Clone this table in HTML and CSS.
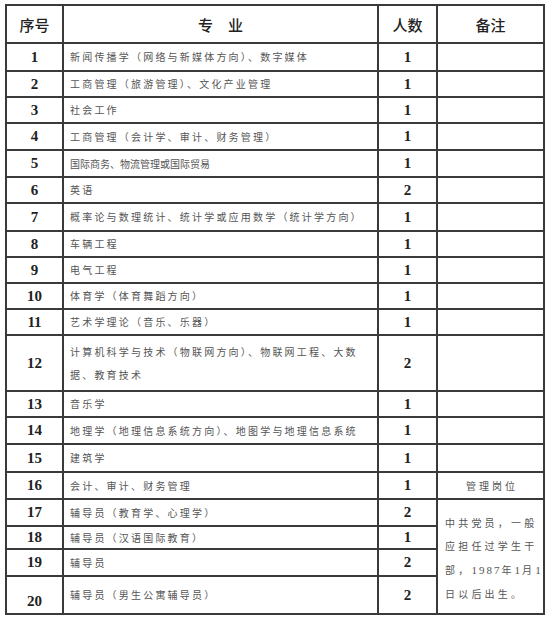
FILE: index.html
```html
<!DOCTYPE html>
<html lang="zh-CN">
<head>
<meta charset="utf-8">
<title>招聘专业表</title>
<link rel="stylesheet" href="styles.css">
</head>
<body>
<table class="grid">
  <colgroup>
    <col class="c-no"><col class="c-major"><col class="c-num"><col class="c-note">
  </colgroup>
  <thead>
    <tr class="h38">
      <th>序号</th>
      <th>专　业</th>
      <th>人数</th>
      <th>备注</th>
    </tr>
  </thead>
  <tbody>
    <tr class="h28"><td class="no">1</td><td class="major">新闻传播学（网络与新媒体方向）、数字媒体</td><td class="num">1</td><td></td></tr>
    <tr class="h26"><td class="no">2</td><td class="major">工商管理（旅游管理）、文化产业管理</td><td class="num">1</td><td></td></tr>
    <tr class="h26"><td class="no">3</td><td class="major">社会工作</td><td class="num">1</td><td></td></tr>
    <tr class="h27"><td class="no">4</td><td class="major">工商管理（会计学、审计、财务管理）</td><td class="num">1</td><td></td></tr>
    <tr class="h27"><td class="no">5</td><td class="major tight">国际商务、物流管理或国际贸易</td><td class="num">1</td><td></td></tr>
    <tr class="h26"><td class="no">6</td><td class="major">英语</td><td class="num">2</td><td></td></tr>
    <tr class="h28"><td class="no">7</td><td class="major">概率论与数理统计、统计学或应用数学（统计学方向）</td><td class="num">1</td><td></td></tr>
    <tr class="h26"><td class="no">8</td><td class="major">车辆工程</td><td class="num">1</td><td></td></tr>
    <tr class="h26"><td class="no">9</td><td class="major">电气工程</td><td class="num">1</td><td></td></tr>
    <tr class="h26"><td class="no">10</td><td class="major">体育学（体育舞蹈方向）</td><td class="num">1</td><td></td></tr>
    <tr class="h26"><td class="no">11</td><td class="major">艺术学理论（音乐、乐器）</td><td class="num">1</td><td></td></tr>
    <tr class="h56"><td class="no">12</td><td class="major two">计算机科学与技术（物联网方向）、物联网工程、大数据、教育技术</td><td class="num">2</td><td></td></tr>
    <tr class="h26"><td class="no">13</td><td class="major">音乐学</td><td class="num">1</td><td></td></tr>
    <tr class="h27"><td class="no">14</td><td class="major">地理学（地理信息系统方向）、地图学与地理信息系统</td><td class="num">1</td><td></td></tr>
    <tr class="h28"><td class="no">15</td><td class="major">建筑学</td><td class="num">1</td><td></td></tr>
    <tr class="h27"><td class="no">16</td><td class="major">会计、审计、财务管理</td><td class="num">1</td><td class="note">管理岗位</td></tr>
    <tr class="h27"><td class="no">17</td><td class="major">辅导员（教育学、心理学）</td><td class="num">2</td>
      <td class="note-long" rowspan="4"><span class="ln">中共党员，一般</span><span class="ln">应担任过学生干</span><span class="ln">部，<span class="dg">1987</span>年<span class="dg">1</span>月<span class="dg">1</span></span><span class="ln">日以后出生。</span></td></tr>
    <tr class="h23"><td class="no">18</td><td class="major">辅导员（汉语国际教育）</td><td class="num">1</td></tr>
    <tr class="h27"><td class="no">19</td><td class="major">辅导员</td><td class="num">2</td></tr>
    <tr class="h38"><td class="no low"><span class="low-num">20</span></td><td class="major">辅导员（男生公寓辅导员）</td><td class="num">2</td></tr>
  </tbody>
</table>
</body>
</html>
```
FILE: styles.css
```css
html, body {
  margin: 0;
  padding: 0;
  background: #ffffff;
}

body {
  padding: 4px 0 0 5px;
  font-family: "Noto Sans CJK SC", "Liberation Serif", serif;
}

.grid {
  border-collapse: collapse;
  table-layout: fixed;
  width: 540px;
}

.c-no { width: 57px; }
.c-major { width: 315px; }
.c-num { width: 59px; }
.c-note { width: 107px; }

.grid th,
.grid td {
  border: 2px solid #3a3a3a;
  padding: 0;
  vertical-align: middle;
}

.grid th {
  font-family: "Noto Sans CJK SC", serif;
  font-weight: 500;
  font-size: 15px;
  color: #222;
  text-align: center;
  line-height: 1;
}

/* cell heights exclude the 2px of collapsed border */
.h23 td { height: 21px; }
.h26 td { height: 24px; }
.h27 td { height: 25px; }
.h28 td { height: 26px; }
.h38 td, .h38 th { height: 36px; }
.h56 td { height: 54px; }

.no,
.num {
  font-family: "Liberation Serif", "Times New Roman", serif;
  font-weight: 700;
  font-size: 15px;
  color: #222;
  text-align: center;
  line-height: 1;
}

.grid td.no.low {
  vertical-align: bottom;
}

.low-num {
  display: inline-block;
  margin-bottom: 4px;
}

.major {
  font-family: "Noto Sans CJK SC", sans-serif;
  font-size: 10px;
  letter-spacing: 2.2px;
  color: #555;
  padding-left: 6px !important;
  line-height: 1;
  white-space: nowrap;
}

.major.tight {
  letter-spacing: 0px;
}

.major.two {
  white-space: normal;
  line-height: 23px;
  padding-right: 4px !important;
}

.note {
  font-family: "Noto Sans CJK SC", sans-serif;
  font-size: 10px;
  letter-spacing: 3px;
  color: #555;
  text-align: center;
  padding-left: 3px !important;
}

.note-long {
  vertical-align: top !important;
  padding: 11px 0 0 7px !important;
  font-family: "Noto Sans CJK SC", sans-serif;
  font-size: 10px;
  letter-spacing: 3.2px;
  color: #555;
  line-height: 23.3px;
}

.ln {
  display: block;
  white-space: nowrap;
}

.dg {
  font-family: "Liberation Serif", serif;
  font-size: 11px;
  letter-spacing: 2px;
}
```
